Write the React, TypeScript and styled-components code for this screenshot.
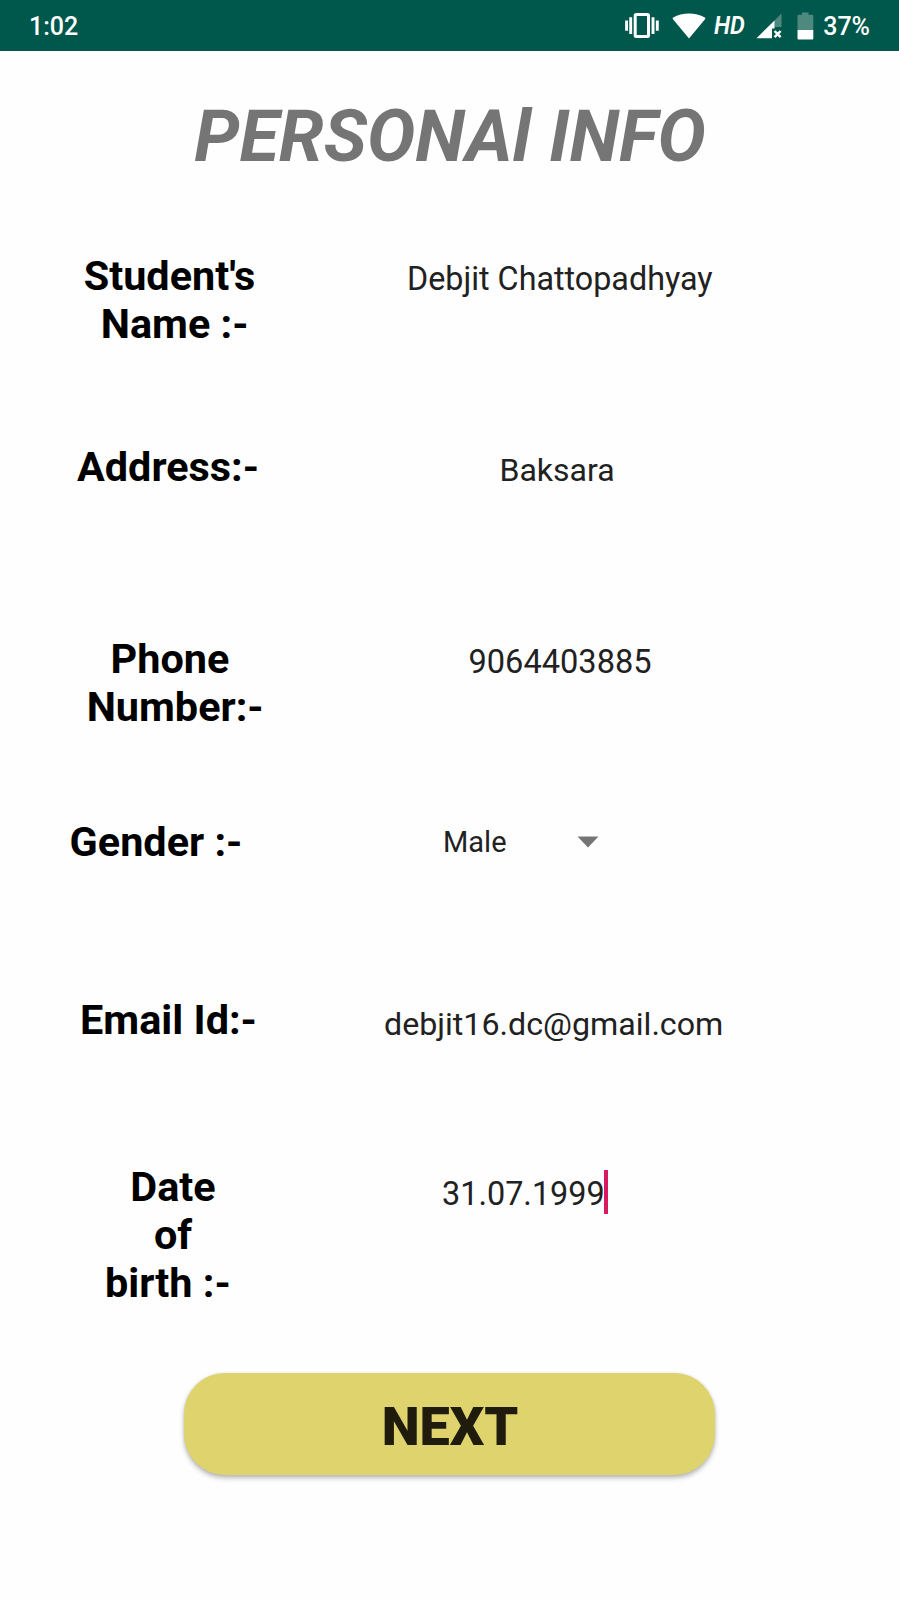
import React from "react";
import styled, { createGlobalStyle } from "styled-components";

const GlobalStyle = createGlobalStyle`
  *, *::before, *::after { box-sizing: border-box; }
  body {
    margin: 0;
    background: #fefefe;
    font-family: Roboto, "Liberation Sans", sans-serif;
  }
`;

const Screen = styled.div`
  width: 899px;
  height: 1599px;
  display: flex;
  flex-direction: column;
  overflow: hidden;
  background: #fefefe;
`;

const StatusBar = styled.header`
  flex: none;
  height: 51px;
  padding: 0 29px 0 29px;
  display: flex;
  align-items: center;
  justify-content: space-between;
  background: #00574b;
  color: #fff;
`;

const StatusText = styled.span`
  font-size: 25px;
  line-height: 30px;
  font-weight: 500;
  padding-top: 2px;
`;

const StatusIcons = styled.div`
  display: flex;
  align-items: center;
  height: 51px;

  svg {
    display: block;
    flex: none;
  }
`;

const HdMark = styled.span`
  width: 30px;
  margin: 0 12px 1px 8px;
  font-size: 26px;
  line-height: 30px;
  font-weight: 600;
  font-style: italic;
  transform: scaleX(0.9);
  transform-origin: left;
`;

const Percent = styled(StatusText)`
  margin-left: 9px;
`;

const Title = styled.h1`
  flex: none;
  margin: 44px 0 0;
  height: 157px;
  padding-left: 1px;
  text-align: center;
  font-size: 72.3px;
  line-height: 84px;
  font-weight: 700;
  font-style: italic;
  color: #757575;
`;

const Form = styled.form`
  flex: none;
  display: flex;
  flex-direction: column;
`;

const Row = styled.div<{ $height: number }>`
  height: ${(p) => p.$height}px;
  display: flex;
  align-items: flex-start;
`;

const Label = styled.label<{ $indent: number }>`
  flex: none;
  margin-left: ${(p) => p.$indent}px;
  width: 200px;
  text-align: center;
  white-space: pre;
  font-size: 41.4px;
  line-height: 48.3px;
  font-weight: 700;
  color: #000;
`;

const Value = styled.div<{ $gap: number; $drop?: number; $size?: number }>`
  margin-left: ${(p) => p.$gap}px;
  padding-top: ${(p) => p.$drop ?? 5.5}px;
  display: flex;
  align-items: center;
  white-space: pre;
  font-size: ${(p) => p.$size ?? 32.2}px;
  line-height: 44px;
  color: #212121;
`;

const Caret = styled.span`
  width: 4px;
  height: 44px;
  margin: -2px 0 2px -0.5px;
  background: #d81b60;
`;

const Arrow = styled.svg`
  display: block;
  margin-left: 70px;
`;

const NextButton = styled.button`
  flex: none;
  align-self: center;
  width: 531px;
  height: 102px;
  margin-right: 1px;
  padding: 5px 0 0 2px;
  border: 0;
  border-radius: 41px;
  background: #ded36c;
  box-shadow: 0 3px 5px rgba(0, 0, 0, 0.28), 0 0 3px rgba(0, 0, 0, 0.08);
  font-family: inherit;
  font-size: 54px;
  line-height: 64px;
  font-weight: 900;
  color: #1f1c0e;
`;

const VibrateIcon = () => (
  <svg width="36" height="28" viewBox="0 0 36 28" fill="none" stroke="#fff">
    <rect x="11.2" y="2.5" width="13.3" height="22" rx="1" strokeWidth="3" />
    <path d="M6.7 5.2v16.8M29 5.2v16.8" strokeWidth="2.9" />
    <path d="M2.6 8.5v10.2M33.3 8.5v10.2" strokeWidth="2.9" />
  </svg>
);

const WifiIcon = () => (
  <svg width="34" height="28" viewBox="0 0 34 28" fill="#fff">
    <path d="M17 26.5 1 7.2C.5 6.6.6 6 1.2 5.6 10 .2 24 .2 32.8 5.6c.6.4.7 1 .2 1.6z" />
  </svg>
);

const SignalIcon = () => (
  <svg width="27" height="28" viewBox="0 0 27 28">
    <path d="M25.5 1.5v13.5h-7.3V8.8z" fill="#4d897f" />
    <path d="M.5 26.2 18.5 8.4v8.1h-2.5v9.7z" fill="#fff" />
    <path d="M18.6 19l6 6.2M24.6 19l-6 6.2" stroke="#fff" strokeWidth="2.5" />
  </svg>
);

const BatteryIcon = () => (
  <svg width="17" height="28" viewBox="0 0 17 28">
    <path d="M5 .5h6.5v2.3h3.5c.8 0 1.3.5 1.3 1.3V18H.5V4.1c0-.8.5-1.3 1.3-1.3H5z" fill="#4d897f" />
    <path d="M.5 18h15.8v8.2c0 .8-.5 1.3-1.3 1.3H1.8c-.8 0-1.3-.5-1.3-1.3z" fill="#fff" />
  </svg>
);

const Gap = styled.span<{ $size: number }>`
  flex: none;
  width: ${(p) => p.$size}px;
`;

export default function App() {
  return (
    <>
      <GlobalStyle />
      <Screen>
        <StatusBar>
          <StatusText>1:02</StatusText>
          <StatusIcons>
            <VibrateIcon />
            <Gap $size={12} />
            <WifiIcon />
            <HdMark>HD</HdMark>
            <SignalIcon />
            <Gap $size={14} />
            <BatteryIcon />
            <Percent>37%</Percent>
          </StatusIcons>
        </StatusBar>
        <Title>PERSONAl INFO</Title>
        <Form onSubmit={(e) => e.preventDefault()}>
          <Row $height={190.5}>
            <Label $indent={69.5}>{"Student's\n Name :-"}</Label>
            <Value $gap={137.5} $size={32.3} $drop={5}>Debjit Chattopadhyay</Value>
          </Row>
          <Row $height={192}>
            <Label $indent={68}>Address:-</Label>
            <Value $gap={231.5} $size={32}>Baksara</Value>
          </Row>
          <Row $height={183}>
            <Label $indent={70}>{"Phone\n Number:-"}</Label>
            <Value $gap={198.5} $size={32.6}>9064403885</Value>
          </Row>
          <Row $height={178.5}>
            <Label $indent={56}>Gender :-</Label>
            <Value $gap={187} $size={29} $drop={2.5}>
              Male
              <Arrow width="22" height="12" viewBox="0 0 22 12">
                <path d="M.5.5h21L11 11.5z" fill="#757575" />
              </Arrow>
            </Value>
          </Row>
          <Row $height={166.5}>
            <Label $indent={68.5}>Email Id:-</Label>
            <Value $gap={115.5}>debjit16.dc@gmail.com</Value>
          </Row>
          <Row $height={210.5}>
            <Label $indent={73}>{"Date\nof\nbirth :- "}</Label>
            <Value $gap={169} $size={32.4} $drop={9}>
              31.07.1999
              <Caret />
            </Value>
          </Row>
        </Form>
        <NextButton type="button">NEXT</NextButton>
      </Screen>
    </>
  );
}
